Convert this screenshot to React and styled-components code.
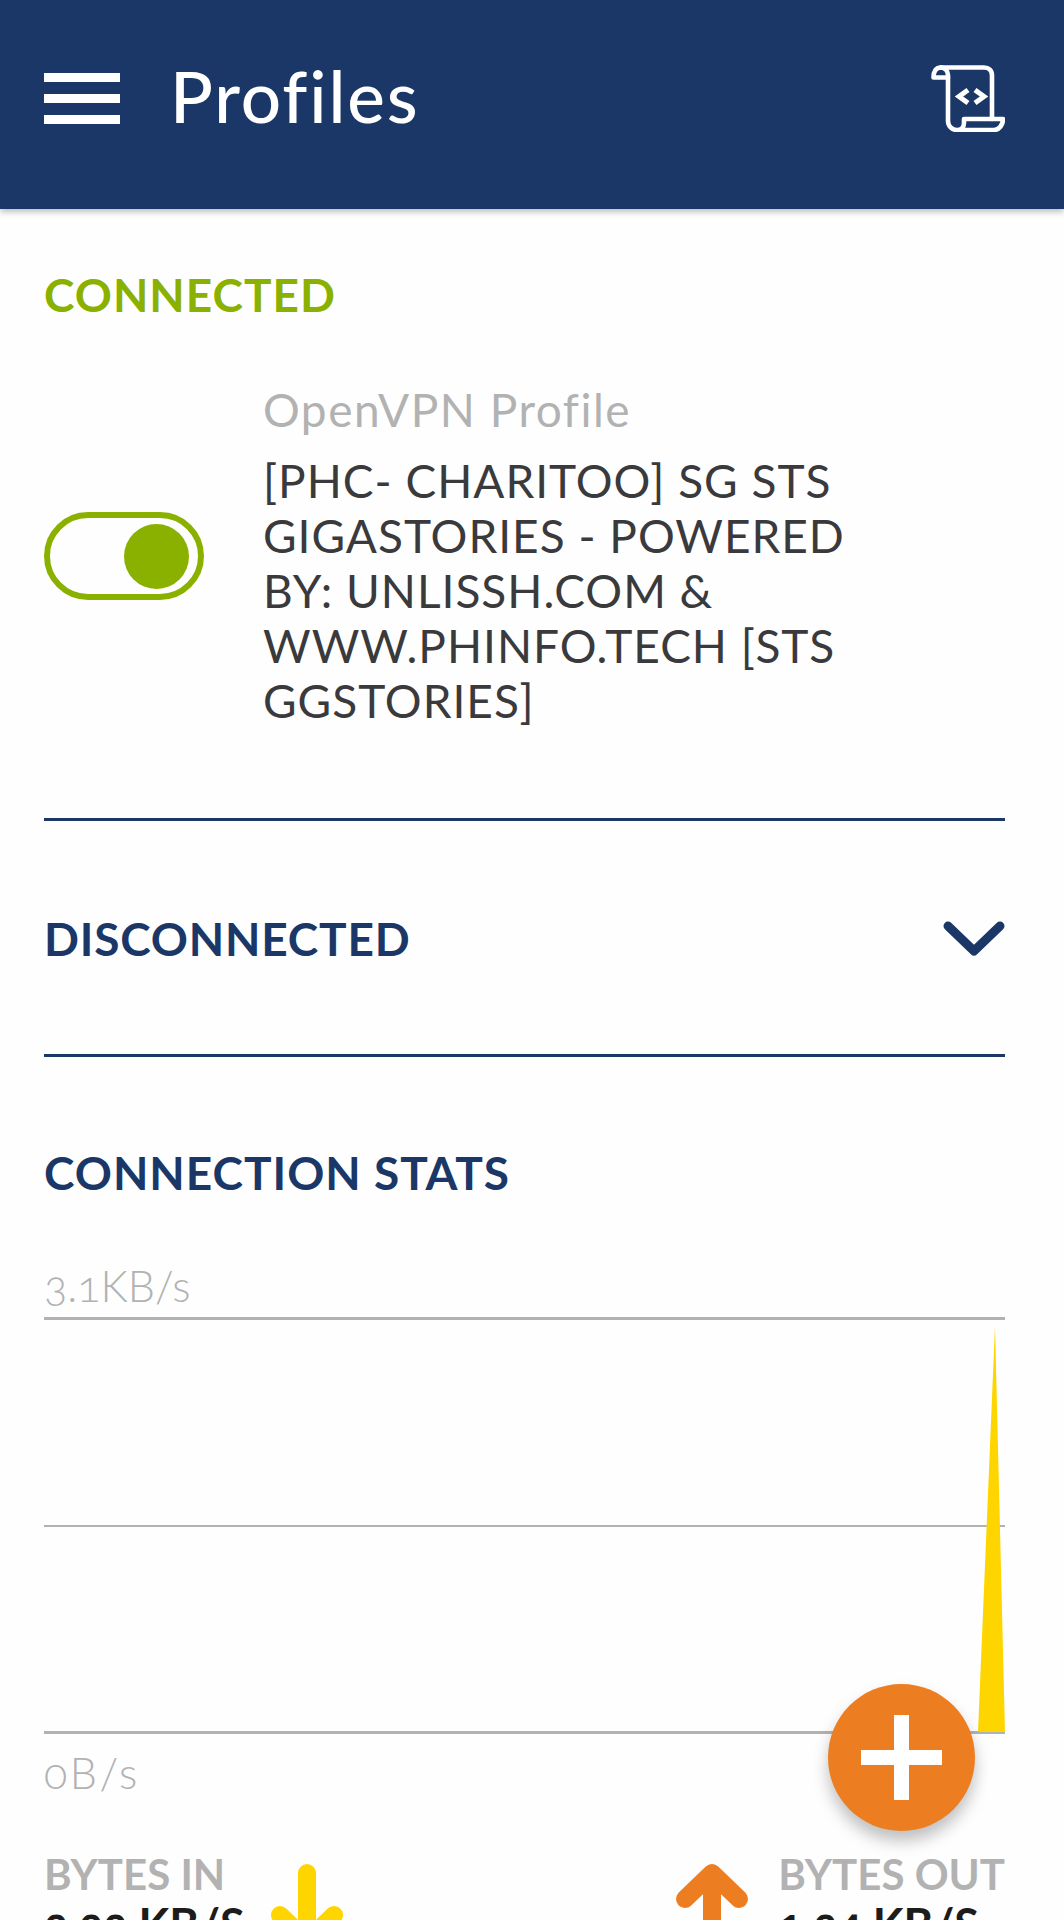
import React from 'react';
import styled, { createGlobalStyle } from 'styled-components';

const Global = createGlobalStyle`
  html, body { margin: 0; padding: 0; background: #fff; }
  * { box-sizing: border-box; }
`;
const Page = styled.div`
  position: relative; width: 1064px; height: 1920px; overflow: hidden; background: #fefefe;
  font-family: Lato, "Open Sans", sans-serif; font-variant-numeric: oldstyle-nums;
`;
const Header = styled.header`
  height: 209px; background: #1b3767; box-shadow: 0 3px 6px rgba(0,0,0,.25);
  display: flex; align-items: flex-start; padding: 65px 59px 0 44px; color: #fff;
`;
const Burger = styled.div`
  width: 76px; height: 51px; margin-top: 8px; display: flex; flex-direction: column; justify-content: space-between;
  & > span { display: block; height: 9px; background: #fff; }
`;
const Title = styled.h1`
  margin: -11px 0 0 50px; flex: 1; font-size: 71px; line-height: 84px; font-weight: 500; letter-spacing: 1.9px;
`;
const Body = styled.main`padding: 0 59px 0 44px;`;
const Section = styled.h2`
  margin: 0; font-size: 46px; line-height: 56px; font-weight: 700; color: ${p => p.$color}; letter-spacing: ${p => p.$ls}px;
`;
const ConnectedHead = styled.div`padding-top: 58px;`;
const ProfileRow = styled.div`display: flex; align-items: center; margin-top: 59px; padding-bottom: 90px; border-bottom: 3px solid #1b3767;`;
const Switch = styled.div`
  width: 160px; height: 88px; flex: none; border: 6.5px solid #8bb100; border-radius: 44px; display: flex; align-items: center; justify-content: flex-end; padding-right: 9px; margin-right: 59px; margin-top: 2px;
  & > span { width: 65px; height: 65px; border-radius: 50%; background: #8bb100; }
`;
const ProfileText = styled.div``;
const ProfileType = styled.div`font-size: 46px; line-height: 56px; color: #b2b2b2; margin-bottom: 15px; letter-spacing: 1.5px;`;
const ProfileName = styled.div`font-size: 46px; line-height: 55px; color: #3a3a3c; font-weight: 400; letter-spacing: 1px; width: 610px;`;
const Accordion = styled.div`
  height: 236px; padding-top: 2px; display: flex; align-items: center; justify-content: space-between; border-bottom: 3px solid #1b3767;
`;
const Stats = styled.div`padding-top: 88px;`;
const Axis = styled.div`font-size: 43px; line-height: 48px; color: #b2b2b2; font-weight: 300;`;
const AxisTop = styled(Axis)`margin: 61px 0 7px;`;
const Chart = styled.svg`display: block; width: 961px; height: 418px;`;
const AxisBottom = styled(Axis)`margin-top: 14px; letter-spacing: 2.5px;`;
const Fab = styled.button`
  position: absolute; left: 828px; top: 1684px; width: 147px; height: 147px; border: 0; border-radius: 50%; background: #ec7e21; box-shadow: 0 10px 16px rgba(0,0,0,.25); display: flex; align-items: center; justify-content: center; padding: 0;
`;
const Row = styled.div`display: flex; justify-content: space-between; margin-top: 54px;`;
const Stat = styled.div`display: flex; gap: ${p => p.$gap}px; align-items: flex-start;`;
const StatText = styled.div``;
const StatLabel = styled.div`font-size: 42px; line-height: 47px; font-weight: 700; color: #b2b2b2;`;
const StatValue = styled.div`font-size: 45px; line-height: 52px; font-weight: 700; color: #1c1c1c;`;
const Arrow = styled.svg`display: block; width: 72px; height: 90px; margin-top: 13px;`;

export default function App() {
  return (
    <Page>
      <Global />
      <Header>
        <Burger><span /><span /><span /></Burger>
        <Title>Profiles</Title>
        <svg width="74" height="67" viewBox="0 0 74 67" fill="none" stroke="#fff" strokeWidth="4.6" strokeLinejoin="round" strokeLinecap="round">
          <path d="M10 2.5H53c5 0 8 3 8 8V54" />
          <path d="M10 2.5C5 2.5 2.5 6 2.5 12.5H17" />
          <path d="M10 2.5C14 2.5 17 6 17 10V56c0 5 4 9 9 9H63c5 0 9-5 9-11H33v4c0 4-3 7-7 7" />
          <path d="M37 25l-9 6.5 9 6.5M44 25l9 6.5-9 6.5" strokeWidth="5" strokeLinejoin="miter" strokeLinecap="butt" />
        </svg>
      </Header>
      <Body>
        <ConnectedHead><Section $color="#8bb100" $ls={1}>CONNECTED</Section></ConnectedHead>
        <ProfileRow>
          <Switch><span /></Switch>
          <ProfileText>
            <ProfileType>OpenVPN Profile</ProfileType>
            <ProfileName>[PHC- CHARITOO] SG STS GIGASTORIES - POWERED BY: UNLISSH.COM &amp; WWW.PHINFO.TECH [STS GGSTORIES]</ProfileName>
          </ProfileText>
        </ProfileRow>
        <Accordion>
          <Section $color="#1b3767" $ls={0.8}>DISCONNECTED</Section>
          <svg width="62" height="36" viewBox="0 0 62 36" fill="none" stroke="#1b3767" strokeWidth="9" strokeLinecap="round" strokeLinejoin="round"><path d="M5 5l26 25L57 5" /></svg>
        </Accordion>
        <Stats>
          <Section $color="#1b3767" $ls={1}>CONNECTION STATS</Section>
          <AxisTop>3.1KB/s</AxisTop>
          <Chart viewBox="0 0 961 418">
            <rect x="0" y="0" width="961" height="3" fill="#b2b2b2" />
            <rect x="0" y="208" width="961" height="2" fill="#b2b2b2" />
            <rect x="0" y="414" width="961" height="3" fill="#b2b2b2" />
            <polygon points="951,9 934,415 961,415" fill="#ffd500" />
          </Chart>
          <AxisBottom>0B/s</AxisBottom>
          <Row>
            <Stat $gap={26}>
              <StatText><StatLabel>BYTES IN</StatLabel><StatValue>2.22 KB/S</StatValue></StatText>
              <Arrow viewBox="0 0 72 90" fill="none" stroke="#ffd500" strokeWidth="18" strokeLinecap="round" strokeLinejoin="round"><path d="M36 9V77M9 51l27 26 27-26" /></Arrow>
            </Stat>
            <Stat $gap={30}>
              <Arrow viewBox="0 0 72 90" fill="none" stroke="#ec7e21" strokeWidth="18" strokeLinecap="round" strokeLinejoin="round"><path d="M36 90V9M9 35L36 9l27 26" /></Arrow>
              <StatText><StatLabel>BYTES OUT</StatLabel><StatValue>1.24 KB/S</StatValue></StatText>
            </Stat>
          </Row>
        </Stats>
      </Body>
      <Fab aria-label="Add">
        <svg width="81" height="85" viewBox="0 0 81 85" fill="#fff"><rect x="33" y="0" width="15" height="85" /><rect x="0" y="35" width="81" height="15" /></svg>
      </Fab>
    </Page>
  );
}
